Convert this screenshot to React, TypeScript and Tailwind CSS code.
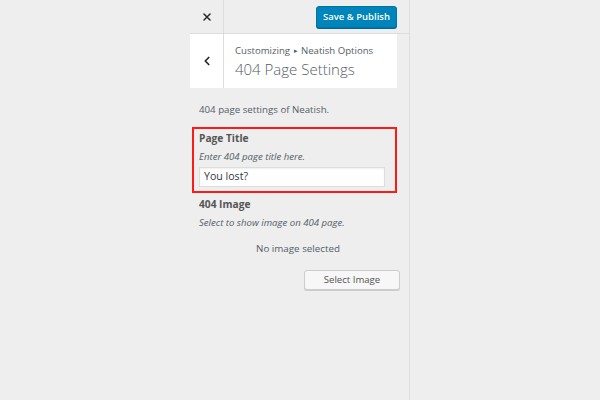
import { X, ChevronLeft } from "lucide-react";

export default function App() {
  return (
    <div
      className="flex h-[400px] w-[600px] bg-[#eeeeee] text-[#555d66]"
      style={{ fontFamily: '"Open Sans", "Liberation Sans", sans-serif' }}
    >
      <div className="w-[190px] shrink-0" />
      <div className="flex w-[220px] shrink-0 flex-col border-r border-[#dddddd] bg-[#eeeeee]">
        {/* header */}
        <div className="flex h-[34px] shrink-0 border-b border-[#dddddd]">
          <button className="flex w-[34px] items-center justify-center border-r border-[#dddddd] text-[#23282d]">
            <X size={12} strokeWidth={3} />
          </button>
          <div className="flex flex-1 items-center justify-end pr-[12px]">
            <button className="h-[22px] w-[81px] rounded-[3px] border border-[#0073aa] bg-[#0085ba] text-[9.5px] font-semibold leading-[20px] text-white shadow-[0_1px_0_#006799]">
              Save &amp; Publish
            </button>
          </div>
        </div>

        {/* section title card */}
        <div className="mr-[12px] flex h-[54px] shrink-0 bg-white">
          <button className="flex w-[34px] items-center justify-center border-r border-[#dddddd] text-[#23282d]">
            <ChevronLeft size={14} strokeWidth={3} />
          </button>
          <div className="flex flex-col justify-center pl-[11px] pt-[1px]">
            <span className="text-[9.6px] leading-[14px]">
              Customizing <span className="mx-[1px] text-[7px] align-[1px]">▸</span> Neatish Options
            </span>
            <span className="text-[15px] font-light leading-[22px]">404 Page Settings</span>
          </div>
        </div>

        {/* controls */}
        <div className="flex flex-col pl-[9px] pr-[12px]">
          <p className="mt-[14px] text-[9.7px] leading-[16px]">404 page settings of Neatish.</p>

          <div className="-ml-[7px] mt-[9px] border-2 border-[#ff1a1a] pb-[4px] pl-[5px] pr-[10px] pt-[1px]">
            <p className="text-[10.2px] font-bold leading-[16px] text-[#555555]">Page Title</p>
            <p className="mt-[3px] text-[9.6px] italic leading-[16px]">Enter 404 page title here.</p>
            <div className="mt-[2px] flex h-[20px] items-center border border-[#dddddd] bg-white pl-[4px] text-[10.6px] text-[#32373c] shadow-[inset_0_1px_2px_rgba(0,0,0,0.07)]">
              You lost?
            </div>
          </div>

          <p className="mt-[3px] text-[10.2px] font-bold leading-[16px] text-[#555555]">404 Image</p>
          <p className="mt-[3px] text-[9.6px] italic leading-[16px]">Select to show image on 404 page.</p>
          <p className="mt-[10px] text-center text-[9.8px] leading-[16px]">No image selected</p>
          <div className="mt-[13px] flex justify-end">
            <button className="mr-[-3px] h-[20px] w-[96px] rounded-[3px] border border-[#cccccc] bg-[#f7f7f7] text-[9.6px] leading-[18px] text-[#555555] shadow-[0_1px_0_#cccccc]">
              Select Image
            </button>
          </div>
        </div>
      </div>
      <div className="flex-1" />
    </div>
  );
}
